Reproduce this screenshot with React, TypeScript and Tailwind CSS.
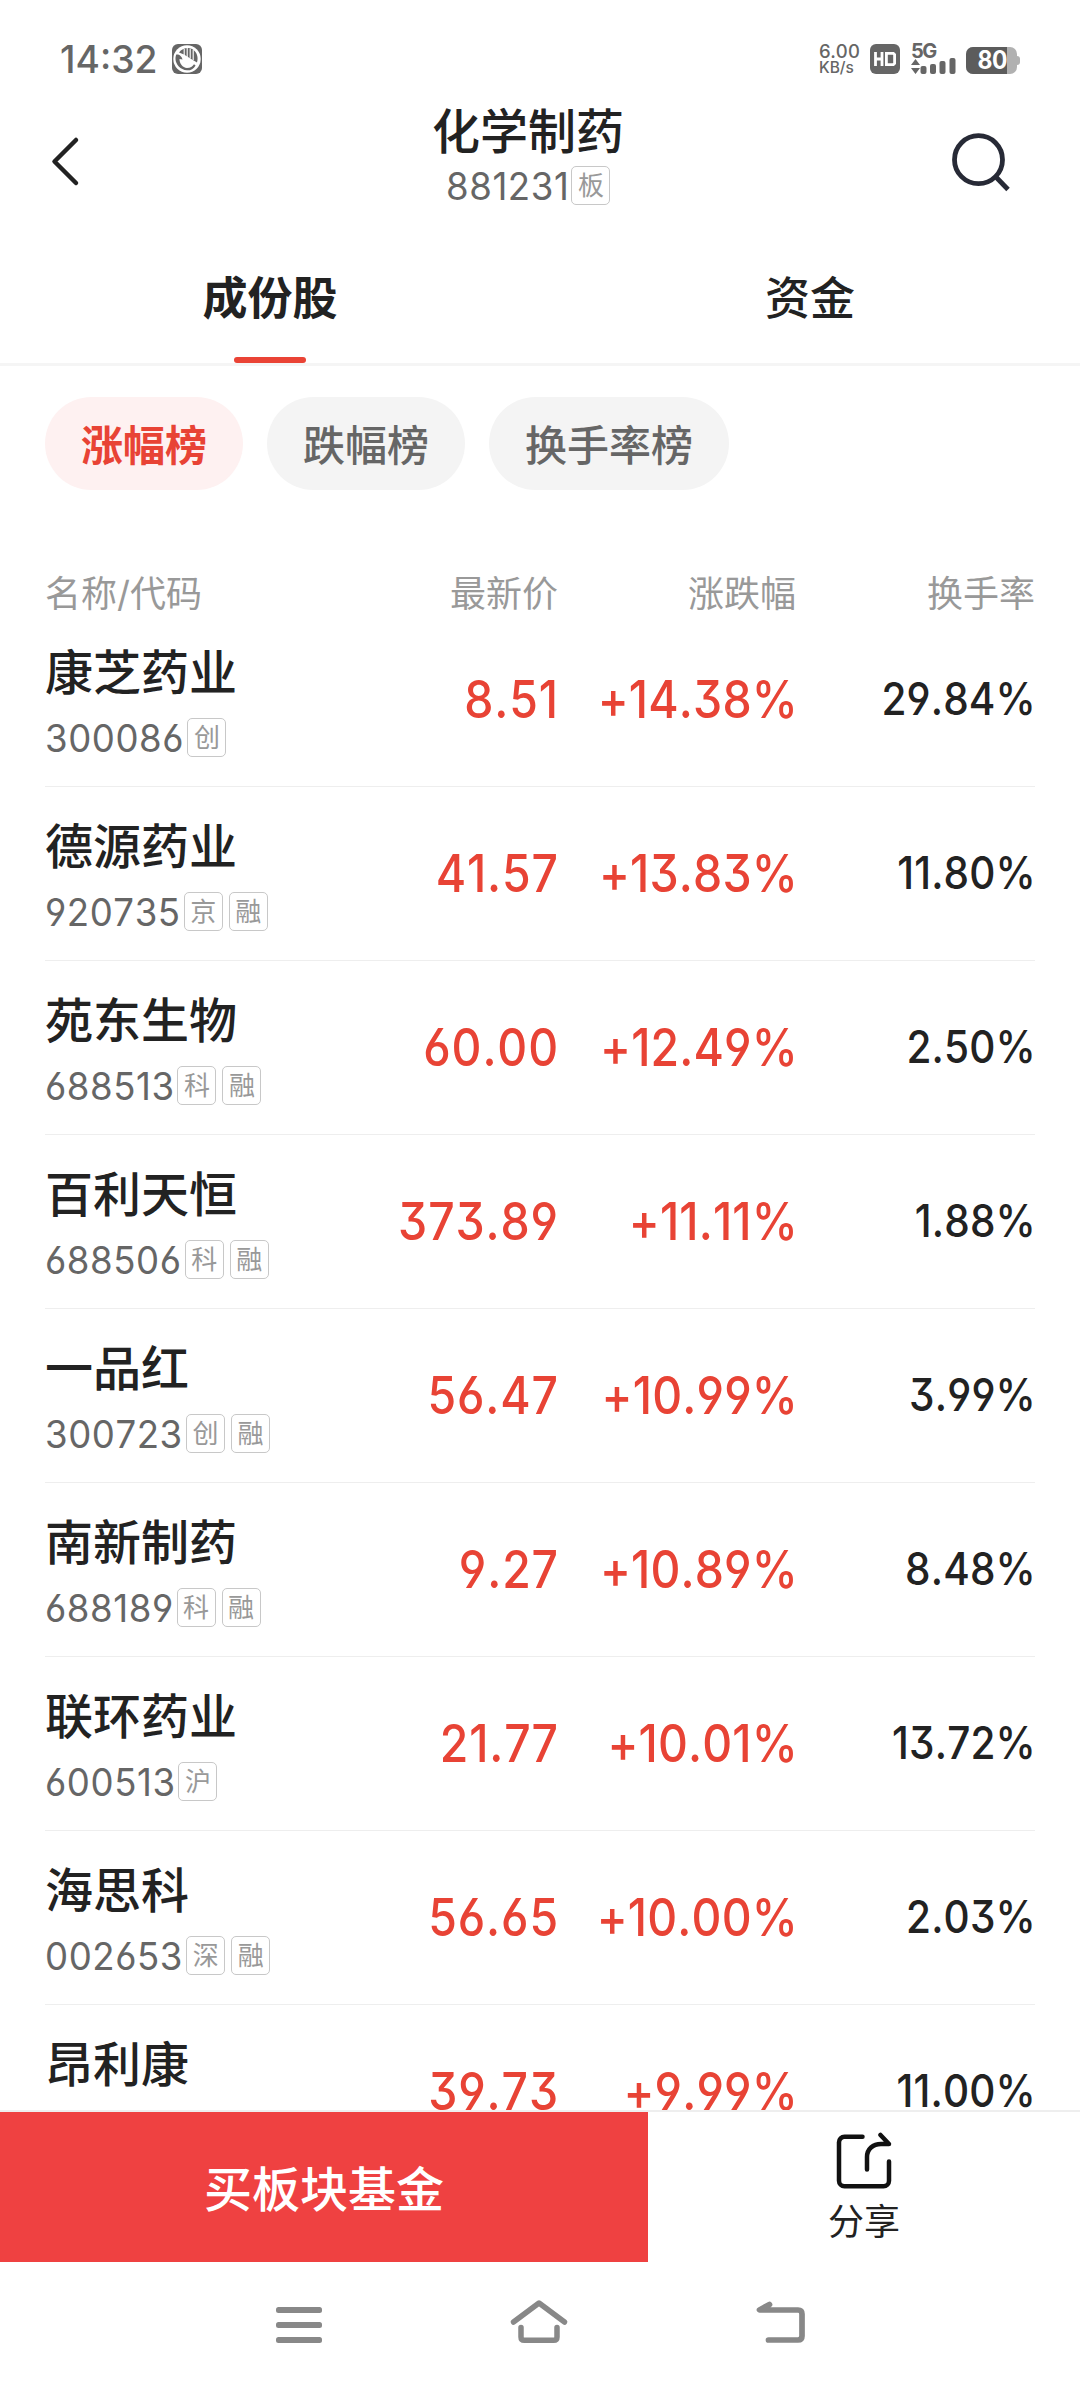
import React from 'react';

interface Stock {
  name: string;
  code: string;
  tags: string[];
  price: string;
  change: string;
  turnover: string;
}

const stocks: Stock[] = [
  { name: '康芝药业', code: '300086', tags: ['创'], price: '8.51', change: '+14.38%', turnover: '29.84%' },
  { name: '德源药业', code: '920735', tags: ['京', '融'], price: '41.57', change: '+13.83%', turnover: '11.80%' },
  { name: '苑东生物', code: '688513', tags: ['科', '融'], price: '60.00', change: '+12.49%', turnover: '2.50%' },
  { name: '百利天恒', code: '688506', tags: ['科', '融'], price: '373.89', change: '+11.11%', turnover: '1.88%' },
  { name: '一品红', code: '300723', tags: ['创', '融'], price: '56.47', change: '+10.99%', turnover: '3.99%' },
  { name: '南新制药', code: '688189', tags: ['科', '融'], price: '9.27', change: '+10.89%', turnover: '8.48%' },
  { name: '联环药业', code: '600513', tags: ['沪'], price: '21.77', change: '+10.01%', turnover: '13.72%' },
  { name: '海思科', code: '002653', tags: ['深', '融'], price: '56.65', change: '+10.00%', turnover: '2.03%' },
  { name: '昂利康', code: '002940', tags: ['深'], price: '39.73', change: '+9.99%', turnover: '11.00%' },
];

const filters = ['涨幅榜', '跌幅榜', '换手率榜'];

function classNames(...classes: string[]) {
  return classes.filter(Boolean).join(' ');
}

const StatusBar = () => (
  <div className="flex h-[88px] items-start justify-between pt-11 pr-[60px] pl-[60px] text-[#666]">
    <div className="flex items-center">
      <span className="w-28 origin-left scale-x-[.98] text-[38px] leading-[30px] font-medium whitespace-nowrap">14:32</span>
      <svg className="h-[30px] w-[30px]" viewBox="0 0 30 30" fill="none">
        <rect width="30" height="30" rx="6" fill="#666" />
        <circle cx="15" cy="15" r="13.700" fill="#fff" />
        <path d="M7 8.500C10 4.500 16 2.800 20.500 5.200 25 8 26.500 13 25 18.500L20 15.500 12 10.500z" fill="#666" />
        <path d="M12.200 5v7M15.200 4v9.500M18.200 4.500v10M21.200 6v10" stroke="#fff" strokeWidth="1.100" />
        <path d="M4.300 10.500C7 10 10 12.200 10.500 15.500L7.500 15C7.500 19.500 10.500 23.700 15 24c3.500 0 5.500-1.500 7-3.800l1.600 1.200C21.500 25 18.500 26.500 15 26.300 8.500 26 3.500 20 3.500 15c0-2 .3-3.500.8-4.500z" fill="#666" />
      </svg>
    </div>
    <div className="flex items-start">
      <div className="flex h-[30px] w-[51px] flex-col justify-between font-medium">
        <span className="text-[18.500px] leading-[15px] tracking-[.3px]">6.00</span>
        <span className="text-[15.500px] leading-[13px]">KB/s</span>
      </div>
      <svg className="mr-[11px] h-[30px] w-[30px]" viewBox="0 0 30 30" fill="none">
        <rect width="30" height="30" rx="6" fill="#666" />
        <path d="M5.500 8v14M12 8v14M5.500 15H12" stroke="#fff" strokeWidth="2.800" />
        <path d="M16.400 9.400h7l1.200 1.200v8.800l-1.200 1.200h-7z" stroke="#fff" strokeWidth="2.800" />
      </svg>
      <div className="mr-[10px] flex h-[30px] w-[45px] flex-col justify-between">
        <span className="text-[20px] leading-[15px] font-bold tracking-[-1.5px]">5G</span>
        <svg className="-mt-px h-4 w-[45px]" viewBox="0 0 45 16" fill="#666">
          <path d="M0 7 4.500 1 9 7zM0 10h9l-4.500 6z" />
          <rect x="9.500" y="8" width="6" height="8" rx="2" />
          <rect x="19" y="6" width="6" height="10" rx="2" />
          <rect x="28.500" y="3" width="6" height="13" rx="2" />
          <rect x="38.500" y="0" width="6" height="16" rx="2" />
        </svg>
      </div>
      <div className="mt-[3px] flex items-center">
        <div className="flex h-[27px] w-[51px] items-center rounded-[7px] bg-[#b1b1b1]">
          <div className="flex h-full w-[41px] items-center justify-end rounded-l-[7px] bg-[#5c5c5c] text-[25px] leading-[27px] font-bold tracking-[-.5px] text-white">
            <span className="origin-right scale-x-[.92]">80</span>
          </div>
        </div>
        <div className="h-[9px] w-[3px] rounded-r-sm bg-[#b1b1b1]" />
      </div>
    </div>
  </div>
);

const Tag = ({ label }: { label: string }) => (
  <span className="flex h-[39px] w-[39px] shrink-0 items-center justify-center rounded-[5px] border border-[#c8c8c8] pt-px text-[26px] leading-none text-[#999]">
    {label}
  </span>
);

const Code = ({ value }: { value: string }) => (
  <span className="mr-[-4px] inline-block origin-left scale-x-[.95] pt-[2px] text-[38.500px] leading-[38px] tracking-[.6px] text-[#666] [font-feature-settings:'cv03','cv04'] [font-kerning:none]">
    {value}
  </span>
);

const TitleBar = () => (
  <div className="flex h-[152px] items-start justify-between">
    <svg className="mt-[46px] ml-[50px] h-[54px] w-[32px]" viewBox="0 0 32 54" fill="none">
      <path d="M26 6 4.500 27.500 26 49" stroke="#222" strokeWidth="4.500" strokeLinecap="round" strokeLinejoin="round" />
    </svg>
    <div className="ml-[26px] flex w-[200px] flex-col items-center pt-[12px]">
      <h1 className="text-[48px] leading-[64px] font-medium text-[#222]">化学制药</h1>
      <div className="mt-px flex items-center">
        <Code value="881231" />
        <Tag label="板" />
      </div>
    </div>
    <svg className="mt-[41px] mr-[66px] h-[66px] w-[66px]" viewBox="0 0 66 66" fill="none" stroke="#272a36" strokeWidth="4.800">
      <circle cx="30.500" cy="30.700" r="24" />
      <path d="m47 47 13 13.500" />
    </svg>
  </div>
);

const Tabs = () => (
  <div className="flex h-[126px] border-b-[3px] border-[#f5f5f5] text-[45px] leading-[45px] text-[#222]">
    <div className="flex flex-1 flex-col items-center justify-between pt-[36px]">
      <span className="font-bold">成份股</span>
      <span className="h-[6px] w-[72px] rounded-full bg-[#ea4335]" />
    </div>
    <div className="flex flex-1 flex-col items-center pt-[36px]">
      <span className="font-medium">资金</span>
    </div>
  </div>
);

const StockRow = ({ stock }: { stock: Stock }) => (
  <li className="grid h-[174px] shrink-0 grid-cols-[275px_238px_238px_239px] border-b border-[#eee]">
    <div className="pt-[28px]">
      <div className="text-[48px] leading-[64px] font-medium whitespace-nowrap text-[#222]">{stock.name}</div>
      <div className="mt-[12px] flex items-center">
        <Code value={stock.code} />
        <div className="flex gap-[6px]">
          {stock.tags.map((tag) => (
            <Tag key={tag} label={tag} />
          ))}
        </div>
      </div>
    </div>
    <span className="-mr-px origin-right scale-x-[.9] pt-[56px] text-right text-[51.500px] leading-[60px] font-medium tracking-[1px] text-[#e84335] [font-kerning:none]">
      {stock.price}
    </span>
    <span className="-mr-[2px] origin-right scale-x-[.9] pt-[56px] text-right text-[51.500px] leading-[60px] font-medium tracking-[.2px] text-[#e84335] [font-kerning:none]">
      {stock.change}
    </span>
    <span className="-mr-px origin-right scale-x-[.9] pt-[56px] text-right text-[45px] leading-[60px] font-medium tracking-[.2px] text-[#222] [font-kerning:none]">
      {stock.turnover}
    </span>
  </li>
);

const BottomBar = () => (
  <div className="flex h-[152px] border-t-2 border-[#eee]">
    <button className="w-[648px] bg-[#ef4141] pt-[5px] text-[48px] font-medium text-white">买板块基金</button>
    <button className="flex flex-1 flex-col items-center pt-[20px] text-[#222]">
      <svg className="h-[58px] w-[56px]" viewBox="0 0 56 58" fill="none" stroke="#111" strokeWidth="4.500" strokeLinecap="round" strokeLinejoin="round">
        <path d="M26.500 4.700H8.500a5.500 5.500 0 0 0-5.500 5.500v38.500a5.500 5.500 0 0 0 5.500 5.500h39a5.500 5.500 0 0 0 5.500-5.500V29.500" />
        <path d="M31 37.500V25C31 17 37 12 45 12H53L44.500 3" />
      </svg>
      <span className="mt-[14px] text-[36px] leading-9">分享</span>
    </button>
  </div>
);

const SystemNav = () => (
  <div className="flex h-[126px] items-start justify-center gap-[188px] pt-[36px] text-[#888]">
    <svg className="h-[46px] w-[46px]" viewBox="0 0 46 46" fill="currentColor">
      <rect y="9" width="46" height="6" rx="2.500" />
      <rect y="24" width="46" height="6" rx="2.500" />
      <rect y="39" width="46" height="6" rx="2.500" />
    </svg>
    <svg className="h-[46px] w-[58px]" viewBox="0 0 58 46" fill="none" stroke="currentColor" strokeWidth="5.500" strokeLinecap="round" strokeLinejoin="round">
      <path d="M3.500 24 29 5l25.500 19" />
      <path d="M11 29.500v9.500q0 3.300 3.300 3.300h29.400q3.300 0 3.300-3.300v-9.500" />
    </svg>
    <svg className="h-[46px] w-[49px]" viewBox="0 0 49 46" fill="none" stroke="currentColor" strokeWidth="5.700" strokeLinecap="round" strokeLinejoin="round">
      <path d="M13.500 6.500 3.500 12h38.500q4 0 4 4v22q0 4-4 4H12.500" />
    </svg>
  </div>
);

const App = () => {
  return (
    <div className="flex h-[2388px] w-[1080px] flex-col overflow-hidden bg-white font-['Inter','Noto_Sans_CJK_SC',sans-serif]">
      <StatusBar />
      <TitleBar />
      <Tabs />
      <div className="flex gap-6 px-[45px] pt-[31px]">
        {filters.map((filter, i) => (
          <span
            key={filter}
            className={classNames(
              i === 0 ? 'bg-[#fef1f1] font-bold text-[#e84335]' : 'bg-[#f4f4f4] font-medium text-[#666]',
              'flex h-[93px] items-center rounded-full px-9 pt-[5px] text-[42px] leading-none',
            )}
          >
            {filter}
          </span>
        ))}
      </div>
      <div className="mt-[80px] grid h-[43px] grid-cols-[275px_238px_238px_239px] px-[45px] pt-[3px] text-right text-[36px] leading-[43px] text-[#999]">
        <span className="text-left">名称/代码</span>
        <span>最新价</span>
        <span>涨跌幅</span>
        <span>换手率</span>
      </div>
      <ul className="flex h-[1497px] shrink-0 flex-col overflow-hidden px-[45px] [font-feature-settings:'cv09','cv03','cv04']">
        {stocks.map((stock) => (
          <StockRow key={stock.code} stock={stock} />
        ))}
      </ul>
      <BottomBar />
      <SystemNav />
    </div>
  );
};

export default App;
